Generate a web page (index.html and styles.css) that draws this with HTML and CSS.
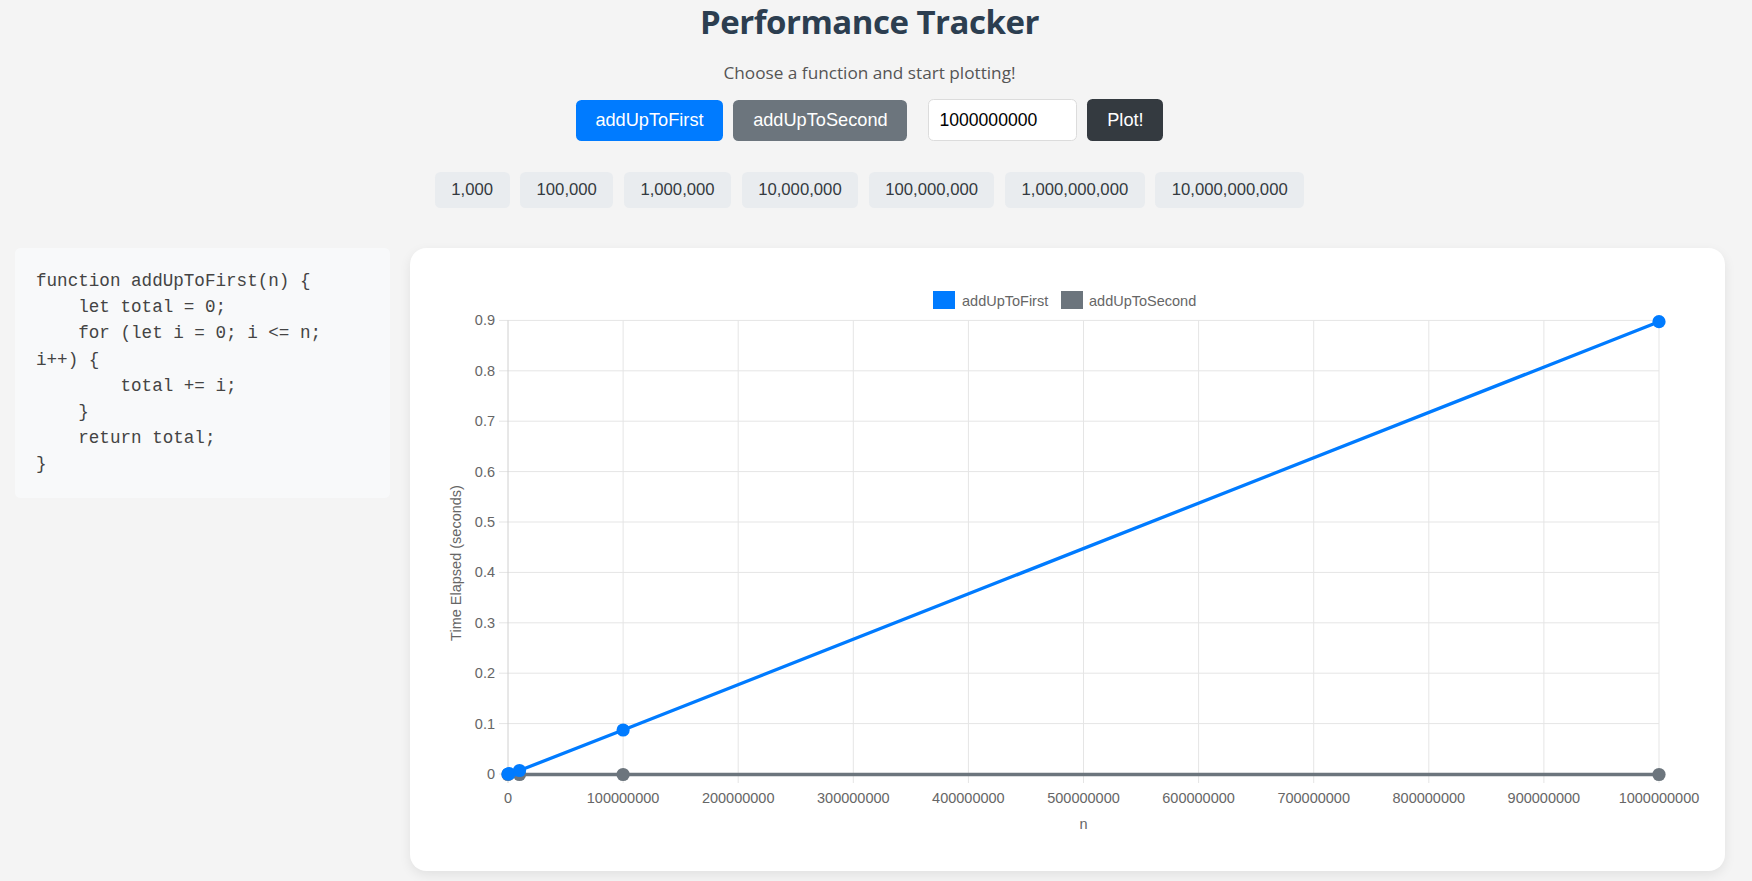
FILE: index.html
```html
<!DOCTYPE html>
<html lang="en">
<head>
<meta charset="utf-8">
<title>Performance Tracker</title>
<link rel="stylesheet" href="styles.css">
</head>
<body>
<div class="page">
  <header class="header">
    <h1 class="title">Performance Tracker</h1>
    <p class="subtitle">Choose a function and start plotting!</p>
    <div class="controls">
      <button class="btn btn-primary">addUpToFirst</button>
      <button class="btn btn-secondary">addUpToSecond</button>
      <input class="num-input" type="text" value="1000000000">
      <button class="btn btn-dark">Plot!</button>
    </div>
    <div class="chips">
      <button class="chip">1,000</button>
      <button class="chip">100,000</button>
      <button class="chip">1,000,000</button>
      <button class="chip">10,000,000</button>
      <button class="chip">100,000,000</button>
      <button class="chip">1,000,000,000</button>
      <button class="chip">10,000,000,000</button>
    </div>
  </header>
  <main class="main">
    <pre class="code">function addUpToFirst(n) {
    let total = 0;
    for (let i = 0; i &lt;= n; i++) {
        total += i;
    }
    return total;
}</pre>
    <section class="card">
      <svg class="chart" viewBox="410 247 1315 623" width="1315" height="623" xmlns="http://www.w3.org/2000/svg">
        <g class="grid">
          <line x1="499" y1="319.4" x2="1659" y2="319.4"/>
          <line x1="499" y1="369.8" x2="1659" y2="369.8"/>
          <line x1="499" y1="420.2" x2="1659" y2="420.2"/>
          <line x1="499" y1="470.6" x2="1659" y2="470.6"/>
          <line x1="499" y1="521" x2="1659" y2="521"/>
          <line x1="499" y1="571.4" x2="1659" y2="571.4"/>
          <line x1="499" y1="621.8" x2="1659" y2="621.8"/>
          <line x1="499" y1="672.2" x2="1659" y2="672.2"/>
          <line x1="499" y1="722.6" x2="1659" y2="722.6"/>
          <line x1="499" y1="773" x2="1659" y2="773"/>
          <line x1="623.1" y1="319.4" x2="623.1" y2="782"/>
          <line x1="738.2" y1="319.4" x2="738.2" y2="782"/>
          <line x1="853.3" y1="319.4" x2="853.3" y2="782"/>
          <line x1="968.4" y1="319.4" x2="968.4" y2="782"/>
          <line x1="1083.5" y1="319.4" x2="1083.5" y2="782"/>
          <line x1="1198.6" y1="319.4" x2="1198.6" y2="782"/>
          <line x1="1313.7" y1="319.4" x2="1313.7" y2="782"/>
          <line x1="1428.8" y1="319.4" x2="1428.8" y2="782"/>
          <line x1="1543.9" y1="319.4" x2="1543.9" y2="782"/>
          <line x1="1659" y1="319.4" x2="1659" y2="782"/>
        </g>
        <line class="axis" x1="508" y1="319.4" x2="508" y2="782"/>
        <g class="ylabels">
          <text x="495" y="319.4">0.9</text>
          <text x="495" y="369.8">0.8</text>
          <text x="495" y="420.2">0.7</text>
          <text x="495" y="470.6">0.6</text>
          <text x="495" y="521">0.5</text>
          <text x="495" y="571.4">0.4</text>
          <text x="495" y="621.8">0.3</text>
          <text x="495" y="672.2">0.2</text>
          <text x="495" y="722.6">0.1</text>
          <text x="495" y="773">0</text>
        </g>
        <g class="xlabels">
          <text x="508" y="797">0</text>
          <text x="623.1" y="797">100000000</text>
          <text x="738.2" y="797">200000000</text>
          <text x="853.3" y="797">300000000</text>
          <text x="968.4" y="797">400000000</text>
          <text x="1083.5" y="797">500000000</text>
          <text x="1198.6" y="797">600000000</text>
          <text x="1313.7" y="797">700000000</text>
          <text x="1428.8" y="797">800000000</text>
          <text x="1543.9" y="797">900000000</text>
          <text x="1659" y="797">1000000000</text>
        </g>
        <text class="axis-title" x="1083.5" y="823">n</text>
        <text class="axis-title" transform="translate(456 562) rotate(-90)" x="0" y="0">Time Elapsed (seconds)</text>
        <g class="legend">
          <rect x="933.5" y="290.5" width="21" height="17" fill="#007bff" stroke="#007bff"/>
          <text x="962" y="299.5">addUpToFirst</text>
          <rect x="1061.5" y="290.5" width="21" height="17" fill="#6c757d" stroke="#6c757d"/>
          <text x="1089" y="299.5">addUpToSecond</text>
        </g>
        <polyline class="series-gray" points="508,773.5 508.1,773.5 509.2,773.5 519.5,773.5 623.1,773.5 1659,773.5"/>
        <g fill="#6c757d">
          <circle cx="508" cy="773.5" r="6.6"/>
          <circle cx="519.5" cy="773.5" r="6.6"/>
          <circle cx="623.1" cy="773.5" r="6.6"/>
          <circle cx="1659" cy="773.5" r="6.6"/>
        </g>
        <polyline class="series-blue" points="508,773 508.1,773 509.2,772.6 519.5,769.5 623.1,729 1659,320.7"/>
        <g fill="#007bff">
          <circle cx="508" cy="773" r="6.6"/>
          <circle cx="509.2" cy="772.6" r="6.6"/>
          <circle cx="519.5" cy="769.5" r="6.6"/>
          <circle cx="623.1" cy="729" r="6.6"/>
          <circle cx="1659" cy="320.7" r="6.6"/>
        </g>
      </svg>
    </section>
  </main>
</div>
</body>
</html>
```

FILE: styles.css
```css
* { box-sizing: border-box; }

html, body {
  margin: 0;
  padding: 0;
  background: #f4f4f4;
}

body {
  font-family: "Open Sans", "Noto Sans", sans-serif;
  overflow: hidden;
  height: 881px;
}

.page {
  width: 1739px;
}

.header {
  display: flex;
  flex-direction: column;
  align-items: center;
}

.title {
  margin: 0;
  font-size: 33px;
  letter-spacing: -0.5px;
  line-height: 44px;
  font-weight: 700;
  color: #2c3e50;
}

.subtitle {
  margin: 17px 0 0;
  font-size: 17.2px;
  line-height: 24px;
  color: #555;
}

.controls {
  margin-top: 14px;
  display: flex;
  align-items: center;
}

.btn {
  height: 41px;
  padding: 0 19.8px;
  border: none;
  border-radius: 5.5px;
  color: #fff;
  font-family: "Liberation Sans", Arial, sans-serif;
  font-size: 18.2px;
  cursor: pointer;
}

.btn-primary { background: #007bff; margin-right: 10px; }
.btn-secondary { background: #6c757d; margin-right: 21px; }
.btn-dark { background: #343a40; height: 42px; width: 76px; padding: 0; }

.num-input {
  width: 149px;
  height: 42px;
  margin-right: 10px;
  padding: 0 10px;
  border: 1px solid #dcdcdc;
  border-radius: 5.5px;
  background: #fff;
  color: #000;
  font-family: "Liberation Sans", Arial, sans-serif;
  font-size: 17.6px;
}

.chips {
  margin-top: 31px;
  display: flex;
  gap: 10.5px;
}

.chip {
  height: 36px;
  padding: 0 16.5px;
  border: none;
  border-radius: 5.5px;
  background: #e9ecef;
  color: #343a40;
  font-family: "Liberation Sans", Arial, sans-serif;
  font-size: 16.7px;
}

.main {
  margin-top: 40px;
  padding: 0 14px 0 15px;
  display: flex;
  align-items: flex-start;
  gap: 20px;
}

.code {
  flex: 0 0 375px;
  margin: 0;
  padding: 20px 21px;
  background: #f8f9fa;
  border-radius: 5.5px;
  font-family: "Liberation Mono", "Courier New", monospace;
  font-size: 17.6px;
  line-height: 26.2px;
  color: #444;
  white-space: pre-wrap;
}

.card {
  flex: 1;
  background: #fff;
  border-radius: 16.5px;
  box-shadow: 0 4px 12px rgba(0, 0, 0, 0.08);
  overflow: hidden;
}

.chart {
  display: block;
}

.grid line {
  stroke: #e5e5e5;
  stroke-width: 1;
}

.axis {
  stroke: #d0d0d0;
  stroke-width: 1;
}

.chart text {
  font-family: "Liberation Sans", Arial, sans-serif;
  font-size: 14.5px;
  fill: #666;
  dominant-baseline: central;
}

.ylabels text { text-anchor: end; }
.xlabels text { text-anchor: middle; }
.axis-title { text-anchor: middle; }

.series-blue {
  fill: none;
  stroke: #007bff;
  stroke-width: 3.3;
  stroke-linejoin: round;
}

.series-gray {
  fill: none;
  stroke: #6c757d;
  stroke-width: 3.6;
  stroke-linejoin: round;
}
```
